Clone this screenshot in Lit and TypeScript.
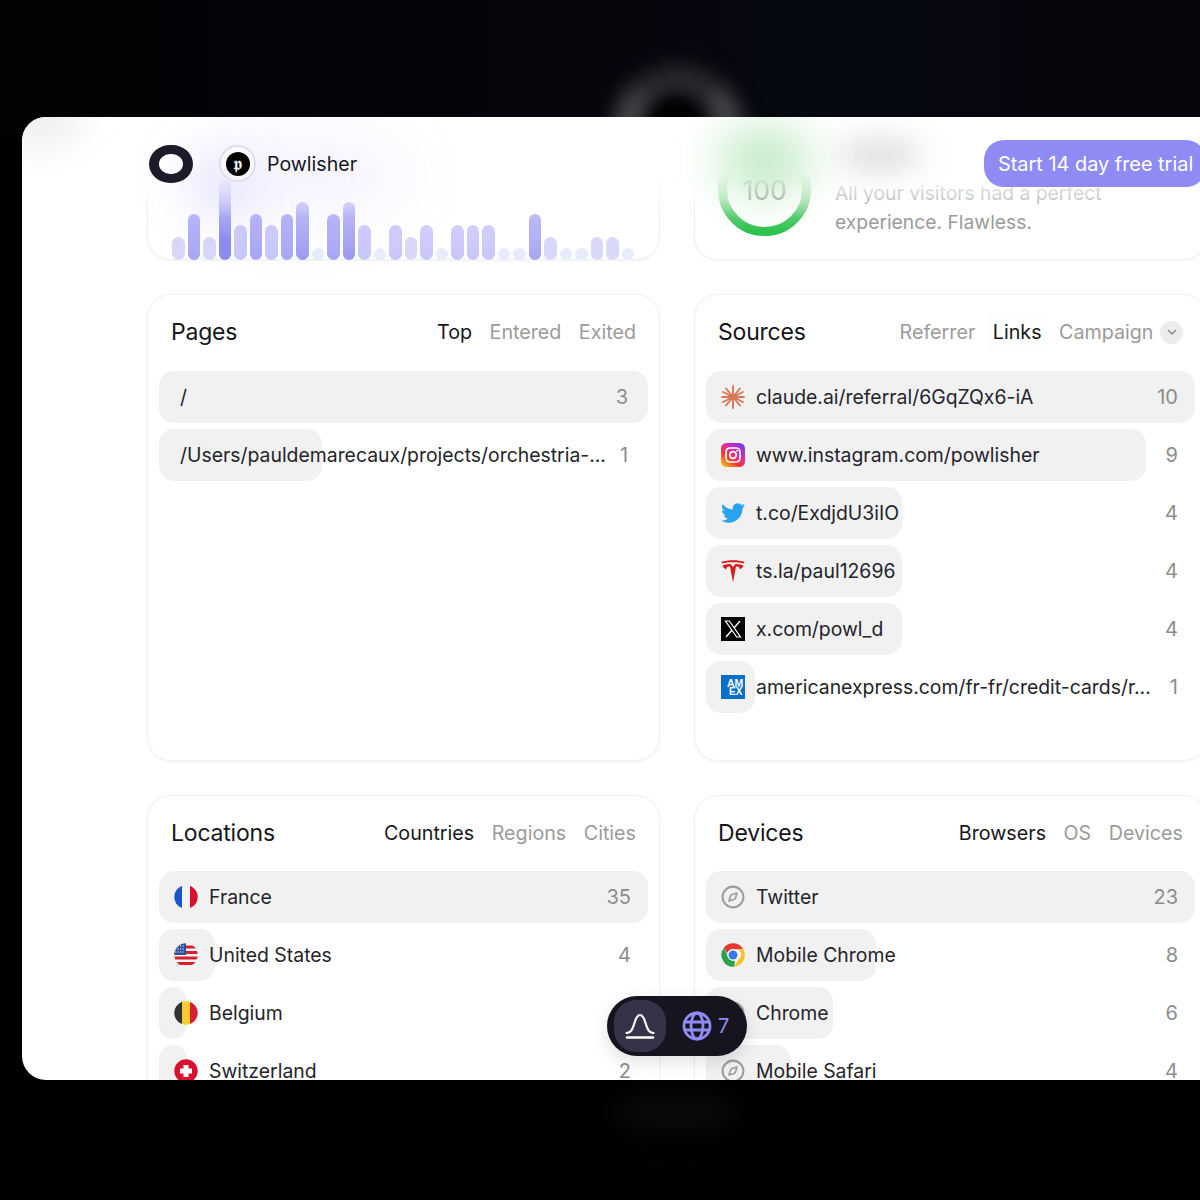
import { LitElement, html, css, svg } from "lit";
import { customElement } from "lit/decorators.js";

const BARS = [23,46,23,80,35,46,35,46,58,12,46,58,35,12,35,23,35,12,35,35,35,12,12,46,23,12,12,23,23,12];
const barClass = (h: number, i: number) => {
  if (h === 80) return "b-tall";
  if (i === 23) return "b-46c";
  if (h === 58) return "b-58";
  if (h === 46) return "b-46";
  if (h === 35) return "b-35";
  if (h === 23) return "b-23";
  return "b-12";
};

const ICONS: Record<string, unknown> = {
  claude: svg`<g stroke="#d97757" stroke-width="1.900" stroke-linecap="round">
    <path d="M12 1V23M1 12H23M5 3.500L19 20.500M19 3.500L5 20.500M2 7L22 17M22 7L2 17"/></g><circle cx="12" cy="12" r="2.600" fill="#d97757"/>`,
  instagram: svg`<defs><linearGradient id="ig" x1="0.1" y1="1" x2="0.9" y2="0">
    <stop offset="0" stop-color="#fdc21f"/><stop offset=".35" stop-color="#f5372f"/><stop offset=".65" stop-color="#d62bb6"/><stop offset="1" stop-color="#6a3df0"/></linearGradient></defs>
    <rect width="24" height="24" rx="5.500" fill="url(#ig)"/>
    <rect x="5" y="5" width="14" height="14" rx="4" fill="none" stroke="#fff" stroke-width="1.700"/>
    <circle cx="12" cy="12" r="3.300" fill="none" stroke="#fff" stroke-width="1.700"/><circle cx="16.300" cy="7.700" r="1" fill="#fff"/>`,
  twitter: svg`<path fill="#2aa3ef" d="M24 4.600c-.9.400-1.800.700-2.800.800 1-.600 1.800-1.600 2.200-2.700-1 .600-2 1-3.100 1.200A4.900 4.900 0 0 0 11.900 8.400C7.800 8.200 4.200 6.300 1.700 3.200c-1.300 2.300-.7 5.100 1.500 6.600-.8 0-1.600-.2-2.200-.6 0 2.300 1.600 4.400 3.900 4.900-.7.200-1.500.2-2.200.1.600 2 2.500 3.400 4.600 3.400A9.900 9.900 0 0 1 0 19.600a14 14 0 0 0 7.500 2.200c9.100 0 14.300-7.700 14-14.600 1-.7 1.800-1.600 2.500-2.600z"/>`,
  tesla: svg`<path fill="#d81a1f" d="M12 23.500L15 7.500C18 7.500 18.800 8.500 18.800 10.500C20.500 9.800 22 8 22.500 6.500C19.500 5.200 16.500 5 14.500 5L12 8L9.500 5C7.500 5 4.500 5.200 1.500 6.500C2 8 3.500 9.800 5.200 10.500C5.200 8.500 6 7.500 9 7.500Z"/><path fill="#d81a1f" d="M.5 2.800C7 .6 17 .6 23.500 2.800L22.800 4.600C17 2.900 7 2.900 1.200 4.600Z"/>`,
  x: svg`<rect width="24" height="24" fill="#000"/><path fill="none" stroke="#fff" stroke-width="1.200" d="M4.500 4h3.800l11.200 16h-3.800z"/><path stroke="#fff" stroke-width="1.400" d="M19 4l-6 7M11 13l-6 7"/>`,
  amex: svg`<rect width="24" height="24" fill="#0a6fca"/><text x="6" y="12" font-family="Liberation Sans" font-weight="700" font-size="10.500" fill="#fff">AM</text><text x="8" y="19.500" font-family="Liberation Sans" font-weight="700" font-size="10" fill="#fff">EX</text>`,
  fr: svg`<clipPath id="cfr"><circle cx="12" cy="12" r="11.700"/></clipPath><g clip-path="url(#cfr)"><rect width="8" height="24" fill="#1c57c9"/><rect x="8" width="8" height="24" fill="#f3f3f3"/><rect x="16" width="8" height="24" fill="#d8102f"/></g>`,
  us: svg`<clipPath id="cus"><circle cx="12" cy="12" r="11.700"/></clipPath><g clip-path="url(#cus)"><rect width="24" height="24" fill="#f4f4f4"/>
    <path fill="#d8202f" d="M0 2.500h24v3H0zM0 8h24v3H0zM0 13.500h24v3H0zM0 19h24v3H0z"/><rect width="12" height="12" fill="#2a4f9e"/>
    <path stroke="#fff" stroke-width="1.200" stroke-dasharray="1.200 1.300" d="M1 3h10M1 6h10M1 9h10"/></g>`,
  be: svg`<clipPath id="cbe"><circle cx="12" cy="12" r="11.700"/></clipPath><g clip-path="url(#cbe)"><rect width="8" height="24" fill="#333"/><rect x="8" width="8" height="24" fill="#f7cb30"/><rect x="16" width="8" height="24" fill="#d8202f"/></g>`,
  ch: svg`<circle cx="12" cy="12" r="11.700" fill="#d9102f"/><path fill="#fff" d="M9.500 6h5v3.500H18v5h-3.500V18h-5v-3.500H6v-5h3.500z"/>`,
  compass: svg`<circle cx="12" cy="12" r="10.400" fill="none" stroke="#9d9d9d" stroke-width="2.100"/><path fill="none" stroke="#9d9d9d" stroke-width="1.700" stroke-linejoin="round" d="M16 8l-1.500 5a2.500 2.500 0 0 1-1.500 1.500L8 16l1.500-5a2.500 2.500 0 0 1 1.500-1.500z"/>`,
  chrome: svg`<path fill="#e33b2e" d="M12 .3a11.700 11.700 0 0 1 10.200 5.900H12a5.800 5.800 0 0 0-5.600 4L2.600 5.300A11.700 11.700 0 0 1 12 .3z"/>
    <path fill="#fbc116" d="M22.200 6.200a11.700 11.700 0 0 1-8.700 17.400l4.500-7.500a5.800 5.800 0 0 0-1-9.900z"/>
    <path fill="#2aa24a" d="M2.600 5.300l5 8.700a5.800 5.800 0 0 0 6.300 3.600l-.4 6A11.700 11.700 0 0 1 2.600 5.300z"/>
    <circle cx="12" cy="12" r="5.800" fill="#fff"/><circle cx="12" cy="12" r="4.500" fill="#3b78e7"/>`,
};

interface Row { label: string; value: string; w: number; icon?: string; }

const PAGES: Row[] = [
  { label: "/", value: "3", w: 489 },
  { label: "/Users/pauldemarecaux/projects/orchestria-...", value: "1", w: 163 },
];
const SOURCES: Row[] = [
  { label: "claude.ai/referral/6GqZQx6-iA", value: "10", w: 489, icon: "claude" },
  { label: "www.instagram.com/powlisher", value: "9", w: 440, icon: "instagram" },
  { label: "t.co/ExdjdU3iIO", value: "4", w: 196, icon: "twitter" },
  { label: "ts.la/paul12696", value: "4", w: 196, icon: "tesla" },
  { label: "x.com/powl_d", value: "4", w: 196, icon: "x" },
  { label: "americanexpress.com/fr-fr/credit-cards/r...", value: "1", w: 49, icon: "amex" },
];
const LOCATIONS: Row[] = [
  { label: "France", value: "35", w: 489, icon: "fr" },
  { label: "United States", value: "4", w: 56, icon: "us" },
  { label: "Belgium", value: "3", w: 28, icon: "be" },
  { label: "Switzerland", value: "2", w: 28, icon: "ch" },
];
const DEVICES: Row[] = [
  { label: "Twitter", value: "23", w: 489, icon: "compass" },
  { label: "Mobile Chrome", value: "8", w: 170, icon: "chrome" },
  { label: "Chrome", value: "6", w: 127, icon: "compass" },
  { label: "Mobile Safari", value: "4", w: 85, icon: "compass" },
];

@customElement("app-root")
export class AppRoot extends LitElement {
  static styles = css`
    :host { display: block; width: 1200px; height: 1200px; position: relative; overflow: hidden; background: #010102;
      font-family: Inter, "Liberation Sans", sans-serif; color: #17171c; }
    .backdrop { position: absolute; left: 0; top: 0; width: 1200px; height: 130px;
      background: linear-gradient(90deg, #020204 0%, #04050a 40%, #070910 70%, #05060b 100%); }
    .halo { position: absolute; left: 613px; top: 66px; width: 130px; height: 130px; box-sizing: border-box; border-radius: 50%;
      border: 28px solid #474749; border-top-color: #2b2b2e; filter: blur(10px); }
    .halo-core { position: absolute; left: 650px; top: 100px; width: 50px; height: 60px; border-radius: 50%; background: #000; filter: blur(7px); }
    .ghost { position: absolute; left: 610px; top: 1092px; width: 130px; height: 42px; border-radius: 50%; background: #090909; filter: blur(12px); }
    .window { position: absolute; left: 22px; top: 117px; width: 1200px; height: 963px; background: #fff;
      border-radius: 24px 0 0 24px; overflow: hidden; }
    .content { display: grid; grid-template-columns: 513px 513px; grid-template-rows: 143px 466.500px 400px; column-gap: 34px; row-gap: 34px;
      padding-left: 125px; }
    .card { box-sizing: border-box; background: #fff; border: 1px solid #f1f1f1; border-radius: 24px; box-shadow: 0 1px 3px rgba(0,0,0,.05);
      position: relative; }
    .chart { display: flex; align-items: flex-end; gap: 3px; padding-left: 24px; height: 143px; }
    .chart i { display: block; width: 12.500px; border-radius: 7px; flex: none; margin-bottom: -1px; }
    .b-12 { background: #e6ecfd; }
    .b-23 { background: #d8d8fa; }
    .b-35 { background: linear-gradient(#d0cffc, #c8c7fa); }
    .b-46 { background: linear-gradient(#b9b8f8, #a9a7f4); }
    .b-46c { background: linear-gradient(#bdbcf8, #a8a6f3); }
    .b-58 { background: linear-gradient(#c2c1f9, #9c9af1); }
    .b-tall { background: linear-gradient(#dcdcfb, #8f8cf0 75%); }
    .score { display: flex; align-items: flex-end; gap: 24px; padding: 0 0 23px 23px; height: 143px; box-sizing: border-box; }
    .ring { position: relative; width: 93px; height: 93px; flex: none; display: grid; place-items: center;
      font-size: 26.500px; color: #858585; }
    .ring svg { position: absolute; inset: 0; }
    .score p { margin: 0 0 -1px; font-size: 19.300px; line-height: 29px; color: #9b9b9b; width: 300px; }
    .head { display: flex; align-items: center; justify-content: space-between; padding: 20px 23px 0; height: 34px; margin-bottom: 1px; }
    .title { font-size: 23px; font-weight: 400; letter-spacing: -0.2px; color: #15151a; }
    .tabs { display: flex; align-items: center; gap: 17.500px; font-size: 19.700px; color: #9b9b9b; }
    .tab.on { color: #17171c; }
    .tab.box { position: relative; }
    .tab.box::before { content: ""; position: absolute; inset: -5px -4px; background: #fcfeff; border: 1px solid #f6fafd; z-index: 0; }
    .tab.box span { position: relative; }
    .chev { width: 23px; height: 23px; border-radius: 50%; background: #ececec; display: grid; place-items: center; margin-left: -11px; }
    .rows { display: flex; flex-direction: column; gap: 6px; padding: 20.500px 11px 0; }
    .row { position: relative; height: 52px; display: flex; align-items: center; padding: 0 17px 0 15px; font-size: 19.400px; }
    .row .bg { position: absolute; left: 0; top: 0; bottom: 0; background: #f1f1f2; border-radius: 15px; }
    .row svg, .row .lbl, .row .val { position: relative; }
    .row svg { width: 24px; height: 24px; flex: none; margin-right: 11px; }
    .row.plain { padding: 0 20px 0 21px; }
    .lbl { flex: 1; white-space: nowrap; color: #24242a; }
    .val { color: #8c8c8c; padding-left: 14px; font-size: 20px; }
    .fade { position: absolute; left: 0; top: 0; width: 100%; height: 100px; background: linear-gradient(#fff 55%, rgba(255,255,255,.55) 78%, rgba(255,255,255,0)); }
    .blob { position: absolute; border-radius: 50%; }
    .b-corner { left: -25px; top: -25px; width: 85px; height: 55px; background: rgba(170,170,160,.2); filter: blur(18px); }
    .b-purple { left: 160px; top: 15px; width: 230px; height: 90px; background: rgba(140,135,245,.09); filter: blur(30px); }
    .b-purple2 { left: 165px; top: 35px; width: 70px; height: 70px; background: rgba(140,135,245,.12); filter: blur(22px); }
    .b-green { left: 695px; top: 8px; width: 95px; height: 72px; background: rgba(90,200,100,.34); filter: blur(22px); }
    .b-gray { left: 815px; top: 22px; width: 85px; height: 32px; background: rgba(110,110,110,.24); filter: blur(15px); }
    .bar { position: absolute; left: 127px; top: 28px; display: flex; align-items: center; height: 38px; }
    .logo { width: 44px; height: 38px; box-sizing: border-box; border-style: solid; border-color: #1b1b29; border-width: 9px 10px; border-radius: 48% / 50%; margin-right: 26px; }
    .avatar { width: 37px; height: 37px; box-sizing: border-box; border-radius: 50%; border: 2px solid #dfdfe9; background: rgba(255,255,255,.5);
      display: grid; place-items: center; margin-right: 11px; margin-top: -1px; }
    .avatar b { width: 24px; height: 24px; border-radius: 50%; background: #000; color: #f2f2f2; display: grid; place-items: center;
      font: 400 18px/24px "DejaVu Serif", "Liberation Serif", serif; overflow: hidden; }
    .brand { font-size: 19.600px; color: #17171c; margin-top: -1px; }
    .trial { position: absolute; left: 962px; top: 23px; width: 222px; height: 47px; box-sizing: border-box; padding-left: 14px; display: flex; align-items: center;
      background: #8f8bf5; border-radius: 20px; color: #fff; font-size: 19.900px; white-space: nowrap; }
    .dock { position: absolute; left: 585px; top: 879px; width: 140px; height: 60px; box-sizing: border-box; border-radius: 30px; background: #15141f;
      display: flex; align-items: center; padding-left: 7px; box-shadow: 0 6px 18px rgba(0,0,0,.12); }
    .dock .act { width: 52px; height: 52px; border-radius: 22px; background: #34334a; display: grid; place-items: center; margin-right: 16px; }
    .dock .num { color: #8f8bf5; font-size: 20px; margin-left: 6px; }
  `;

  private list(rows: Row[]) {
    return html`<div class="rows">${rows.map(r => html`
      <div class="row ${r.icon ? "" : "plain"}">
        <div class="bg" style="width:${r.w}px"></div>
        ${r.icon ? svg`<svg viewBox="0 0 24 24">${ICONS[r.icon]}</svg>` : ""}
        <span class="lbl">${r.label}</span><span class="val">${r.value}</span>
      </div>`)}</div>`;
  }

  private panel(title: string, tabs: unknown, rows: Row[]) {
    return html`<section class="card"><div class="head"><div class="title">${title}</div><div class="tabs">${tabs}</div></div>${this.list(rows)}</section>`;
  }

  render() {
    return html`
      <div class="backdrop"></div><div class="halo"></div><div class="halo-core"></div><div class="ghost"></div>
      <div class="window">
        <div class="content">
          <section class="card chart">${BARS.map((h, i) => html`<i class=${barClass(h, i)} style="height:${h}px"></i>`)}</section>
          <section class="card score">
            <div class="ring">
              <svg viewBox="0 0 93 93"><defs><linearGradient id="rg" x1="0" y1="0" x2="0" y2="1"><stop offset="0" stop-color="#bfe8c4"/><stop offset=".6" stop-color="#92dc9c"/><stop offset="1" stop-color="#2cc24f"/></linearGradient></defs>
                <circle cx="46.500" cy="46.500" r="42" fill="none" stroke="url(#rg)" stroke-width="9"/></svg>
              100
            </div>
            <p>All your visitors had a perfect experience. Flawless.</p>
          </section>
          ${this.panel("Pages", html`<span class="tab on">Top</span><span class="tab">Entered</span><span class="tab">Exited</span>`, PAGES)}
          ${this.panel("Sources", html`<span class="tab">Referrer</span><span class="tab on box"><span>Links</span></span><span class="tab">Campaign</span>
            <span class="chev"><svg width="12" height="12" viewBox="0 0 12 12"><path d="M2.500 4.500L6 8l3.500-3.500" fill="none" stroke="#8c8c8c" stroke-width="1.500" stroke-linecap="round" stroke-linejoin="round"/></svg></span>`, SOURCES)}
          ${this.panel("Locations", html`<span class="tab on">Countries</span><span class="tab">Regions</span><span class="tab">Cities</span>`, LOCATIONS)}
          ${this.panel("Devices", html`<span class="tab on">Browsers</span><span class="tab">OS</span><span class="tab">Devices</span>`, DEVICES)}
        </div>
        <div class="fade"></div>
        <div class="blob b-corner"></div><div class="blob b-purple"></div><div class="blob b-purple2"></div><div class="blob b-green"></div><div class="blob b-gray"></div>
        <div class="bar"><div class="logo"></div><div class="avatar"><b>𝖕</b></div><div class="brand">Powlisher</div></div>
        <div class="trial">Start 14 day free trial</div>
        <div class="dock">
          <div class="act"><svg width="32" height="28" viewBox="0 0 32 28"><path d="M2.500 21c4.500 0 6-3.500 8-10C12 6 13.500 3 16 3s4 3 5.500 8c2 6.500 3.500 10 8 10" fill="none" stroke="#fff" stroke-width="2.200" stroke-linecap="round"/><path d="M3 25.500h26" stroke="#fff" stroke-width="2.600" stroke-linecap="round"/></svg></div>
          <svg width="30" height="30" viewBox="0 0 30 30" fill="none" stroke="#8f8bf5" stroke-width="2.800"><circle cx="15" cy="15" r="13"/><ellipse cx="15" cy="15" rx="6" ry="13"/><path d="M2.500 11h25M2.500 19h25"/></svg>
          <span class="num">7</span>
        </div>
      </div>`;
  }
}
